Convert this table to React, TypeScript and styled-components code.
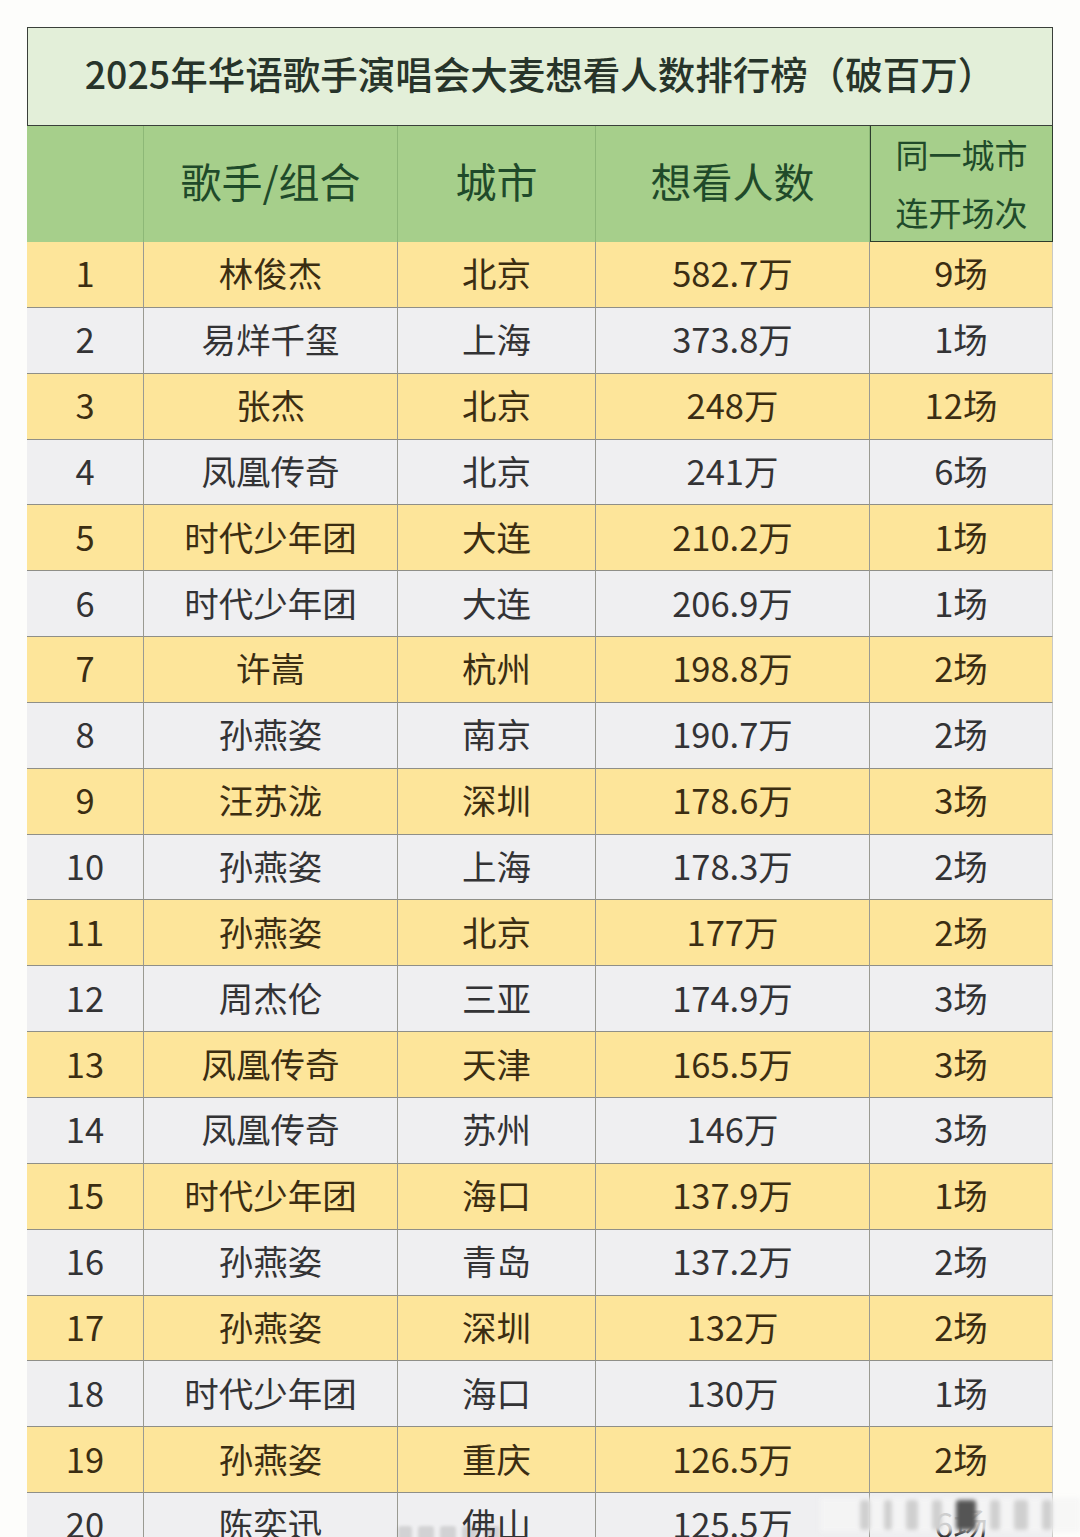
import React from "react";
import styled, { createGlobalStyle } from "styled-components";

const Global = createGlobalStyle`
  html, body { margin: 0; padding: 0; background: #fdfdfb; }
  body { font-family: "Noto Sans CJK SC", "Noto Sans", sans-serif; }
  #root { height: 1537px; overflow: hidden; }
`;

const Page = styled.div`
  position: relative;
  padding: 27px 0 0 27px;
  height: 1537px;
  box-sizing: border-box;
  overflow: hidden;
`;

const Grid = styled.div`
  display: grid;
  grid-template-columns: 117px 254px 198px 274px 183px;
  width: 1026px;
`;

const Title = styled.div`
  grid-column: 1 / -1;
  height: 99px;
  box-sizing: border-box;
  border: 1.5px solid #3a3f3a;
  background: #e3efd9;
  color: #27342a;
  font-size: 37.5px;
  font-weight: 500;
  display: flex;
  align-items: center;
  justify-content: center;
  padding-bottom: 8px;
`;

const HeadCell = styled.div<{ $boxed?: boolean }>`
  height: 116px;
  box-sizing: border-box;
  background: #a6cf8b;
  color: #1f4a2a;
  font-size: ${(p) => (p.$boxed ? "33px" : "41px")};
  line-height: ${(p) => (p.$boxed ? "58px" : "1.2")};
  display: flex;
  flex-direction: column;
  align-items: center;
  justify-content: center;
  text-align: center;
  padding-bottom: ${(p) => (p.$boxed ? "2px" : "6px")};
  border-right: ${(p) => (p.$boxed ? "1.5px solid #2c3c2c" : "1px solid #8db877")};
  border-left: ${(p) => (p.$boxed ? "1.5px solid #2c3c2c" : "none")};
  border-bottom: ${(p) => (p.$boxed ? "1.5px solid #2c3c2c" : "none")};
`;

const Cell = styled.div<{ $alt: boolean; $last?: boolean }>`
  height: 65.85px;
  box-sizing: border-box;
  background: ${(p) => (p.$alt ? "#fde59a" : "#efeff1")};
  color: ${(p) => (p.$alt ? "#3b2d12" : "#333335")};
  font-size: 34.5px;
  display: flex;
  align-items: center;
  justify-content: center;
  padding-bottom: 4px;
  border-bottom: 1px solid #8f8f88;
  border-right: ${(p) => (p.$last ? "1px solid #c9c9c4" : "1px solid #9a9a92")};
`;

const Watermark = styled.div`
  position: absolute;
  left: 820px;
  top: 1498px;
  width: 260px;
  height: 34px;
  background: rgba(245, 245, 245, 0.8);
  filter: blur(2px);
  display: flex;
  align-items: center;
  gap: 14px;
  padding-left: 40px;
  box-sizing: border-box;
`;

const HandleMark = styled.div`
  position: absolute;
  left: 398px;
  top: 1526px;
  width: 140px;
  height: 12px;
  display: flex;
  gap: 6px;
  filter: blur(1.5px);
  opacity: 0.18;
`;

const Blob = styled.span<{ $w: number; $dark?: boolean }>`
  display: inline-block;
  width: ${(p) => p.$w}px;
  height: 30px;
  background: ${(p) => (p.$dark ? "#555" : "#cfcfcf")};
  border-radius: 3px;
`;

const rows: [string, string, string, string][] = [
  ["林俊杰", "北京", "582.7万", "9场"],
  ["易烊千玺", "上海", "373.8万", "1场"],
  ["张杰", "北京", "248万", "12场"],
  ["凤凰传奇", "北京", "241万", "6场"],
  ["时代少年团", "大连", "210.2万", "1场"],
  ["时代少年团", "大连", "206.9万", "1场"],
  ["许嵩", "杭州", "198.8万", "2场"],
  ["孙燕姿", "南京", "190.7万", "2场"],
  ["汪苏泷", "深圳", "178.6万", "3场"],
  ["孙燕姿", "上海", "178.3万", "2场"],
  ["孙燕姿", "北京", "177万", "2场"],
  ["周杰伦", "三亚", "174.9万", "3场"],
  ["凤凰传奇", "天津", "165.5万", "3场"],
  ["凤凰传奇", "苏州", "146万", "3场"],
  ["时代少年团", "海口", "137.9万", "1场"],
  ["孙燕姿", "青岛", "137.2万", "2场"],
  ["孙燕姿", "深圳", "132万", "2场"],
  ["时代少年团", "海口", "130万", "1场"],
  ["孙燕姿", "重庆", "126.5万", "2场"],
  ["陈奕迅", "佛山", "125.5万", "6场"],
];

export default function App() {
  return (
    <>
      <Global />
      <Page>
        <Grid>
          <Title>2025年华语歌手演唱会大麦想看人数排行榜（破百万）</Title>
          <HeadCell />
          <HeadCell>歌手/组合</HeadCell>
          <HeadCell>城市</HeadCell>
          <HeadCell>想看人数</HeadCell>
          <HeadCell $boxed>
            <span>同一城市</span>
            <span>连开场次</span>
          </HeadCell>
          {rows.map((r, i) => {
            const alt = i % 2 === 0;
            return (
              <React.Fragment key={i}>
                <Cell $alt={alt}>{i + 1}</Cell>
                <Cell $alt={alt}>{r[0]}</Cell>
                <Cell $alt={alt}>{r[1]}</Cell>
                <Cell $alt={alt}>{r[2]}</Cell>
                <Cell $alt={alt} $last>{r[3]}</Cell>
              </React.Fragment>
            );
          })}
        </Grid>
        <HandleMark>
          <Blob $w={14} $dark />
          <Blob $w={16} $dark />
          <Blob $w={16} $dark />
          <Blob $w={16} $dark />
          <Blob $w={16} $dark />
        </HandleMark>
        <Watermark>
          <Blob $w={10} />
          <Blob $w={8} />
          <Blob $w={12} />
          <Blob $w={10} />
          <Blob $w={20} $dark />
          <Blob $w={10} />
          <Blob $w={14} />
          <Blob $w={10} />
        </Watermark>
      </Page>
    </>
  );
}
